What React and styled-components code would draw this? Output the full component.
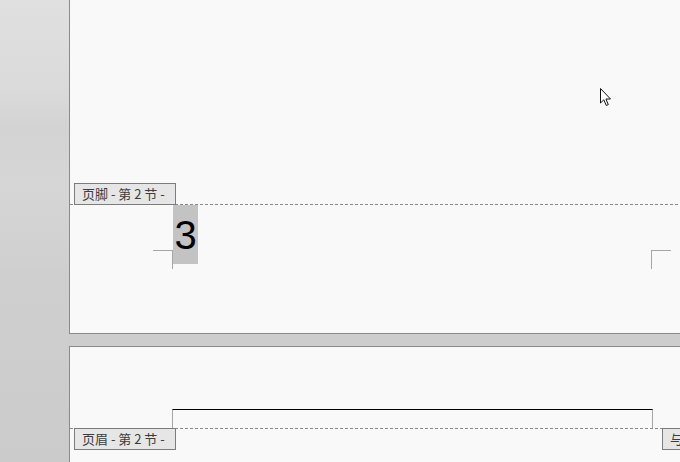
import React from 'react';
import styled, { createGlobalStyle } from 'styled-components';

const GlobalStyle = createGlobalStyle`
  html, body {
    margin: 0;
    padding: 0;
    width: 680px;
    height: 462px;
    overflow: hidden;
    background: #cdcdcd;
  }
`;

const Window = styled.div`
  position: relative;
  display: flex;
  width: 680px;
  height: 462px;
  overflow: hidden;
  font-family: "Noto Sans CJK SC", "Liberation Sans", sans-serif;
`;

const Sidebar = styled.div`
  width: 69px;
  flex-shrink: 0;
  background: linear-gradient(to bottom, #e0e0e0 0%, #dadada 20%, #d3d3d3 28%, #d6d6d6 40%, #cfcfcf 60%, #cbcbcb 100%);
`;

const Canvas = styled.div`
  flex: 1;
  display: flex;
  flex-direction: column;
  gap: 12px;
  background: #cdcdcd;
`;

const Page = styled.div`
  display: flex;
  flex-direction: column;
  background: #f9f9f9;
  border-left: 1px solid #8a8a8a;
  border-top: ${p => (p.$top ? '1px solid #8a8a8a' : 'none')};
  border-bottom: ${p => (p.$bottom ? '1px solid #8a8a8a' : 'none')};
  height: ${p => p.$height}px;
  flex-shrink: 0;
`;

const BodyArea = styled.div`
  height: ${p => p.$height}px;
  flex-shrink: 0;
`;

const DashedZone = styled.div`
  position: relative;
  flex: 1;
  background-image: repeating-linear-gradient(to right, #8a8a8a 0 3px, transparent 3px 5px);
  background-size: 100% 1px;
  background-repeat: no-repeat;
  background-position: 0 0;
`;

const Tab = styled.div`
  position: absolute;
  top: ${p => p.$top}px;
  left: ${p => p.$left}px;
  height: 22px;
  box-sizing: border-box;
  padding: 0 7px;
  border: 1px solid #7c7c7c;
  background: #e6e6e6;
  color: #3c3c3c;
  font-size: 13px;
  line-height: 20px;
  white-space: nowrap;
  width: ${p => (p.$width ? `${p.$width}px` : 'auto')};
`;

const FooterContent = styled.div`
  padding: 1px 0 0 103px;
`;

const PageNumber = styled.span`
  display: inline-block;
  height: 59px;
  width: 25px;
  background: #c3c3c3;
  color: #000;
  font-family: "Liberation Sans", "DejaVu Sans", sans-serif;
  font-size: 40px;
  line-height: 61px;
  text-align: center;
`;

const CropMark = styled.div`
  position: absolute;
  top: ${p => p.$top}px;
  left: ${p => p.$left}px;
  width: ${p => p.$w}px;
  height: 19px;
  border-top: 1px solid #a6a6a6;
  ${p => (p.$side === 'right' ? 'border-right' : 'border-left')}: 1px solid #a6a6a6;
  box-sizing: border-box;
`;

const HeaderRow = styled.div`
  padding: 62px 0 0 102px;
`;

const HeaderBox = styled.div`
  width: 481px;
  height: 19px;
  box-sizing: border-box;
  border-top: 1px solid #000;
  border-left: 1px solid #a6a6a6;
  border-right: 1px solid #a6a6a6;
`;

const Cursor = styled.svg`
  position: absolute;
  left: 599px;
  top: 87px;
`;

export default function App() {
  return (
    <>
      <GlobalStyle />
      <Window>
        <Sidebar />
        <Canvas>
          <Page $height={333} $bottom>
            <BodyArea $height={204} />
            <DashedZone>
              <Tab $top={-21} $left={4} $width={102}>页脚 - 第 2 节 -</Tab>
              <FooterContent>
                <PageNumber>3</PageNumber>
              </FooterContent>
              <CropMark $top={46} $left={83} $w={20} $side="right" />
              <CropMark $top={46} $left={581} $w={20} $side="left" />
            </DashedZone>
          </Page>
          <Page $height={200} $top>
            <HeaderRow>
              <HeaderBox />
            </HeaderRow>
            <DashedZone>
              <Tab $top={0} $left={592}>与上一节相同</Tab>
              <Tab $top={0} $left={4} $width={102}>页眉 - 第 2 节 -</Tab>
            </DashedZone>
          </Page>
        </Canvas>
        <Cursor width="14" height="22" viewBox="0 0 14 22">
          <path
            d="M1.5 1.5 L1.5 16 L4.8 12.8 L7.3 18.5 L9.3 17.6 L6.9 12 L11.5 12 Z"
            fill="#fff"
            stroke="#111"
            strokeWidth="1"
            strokeLinejoin="miter"
          />
        </Cursor>
      </Window>
    </>
  );
}
